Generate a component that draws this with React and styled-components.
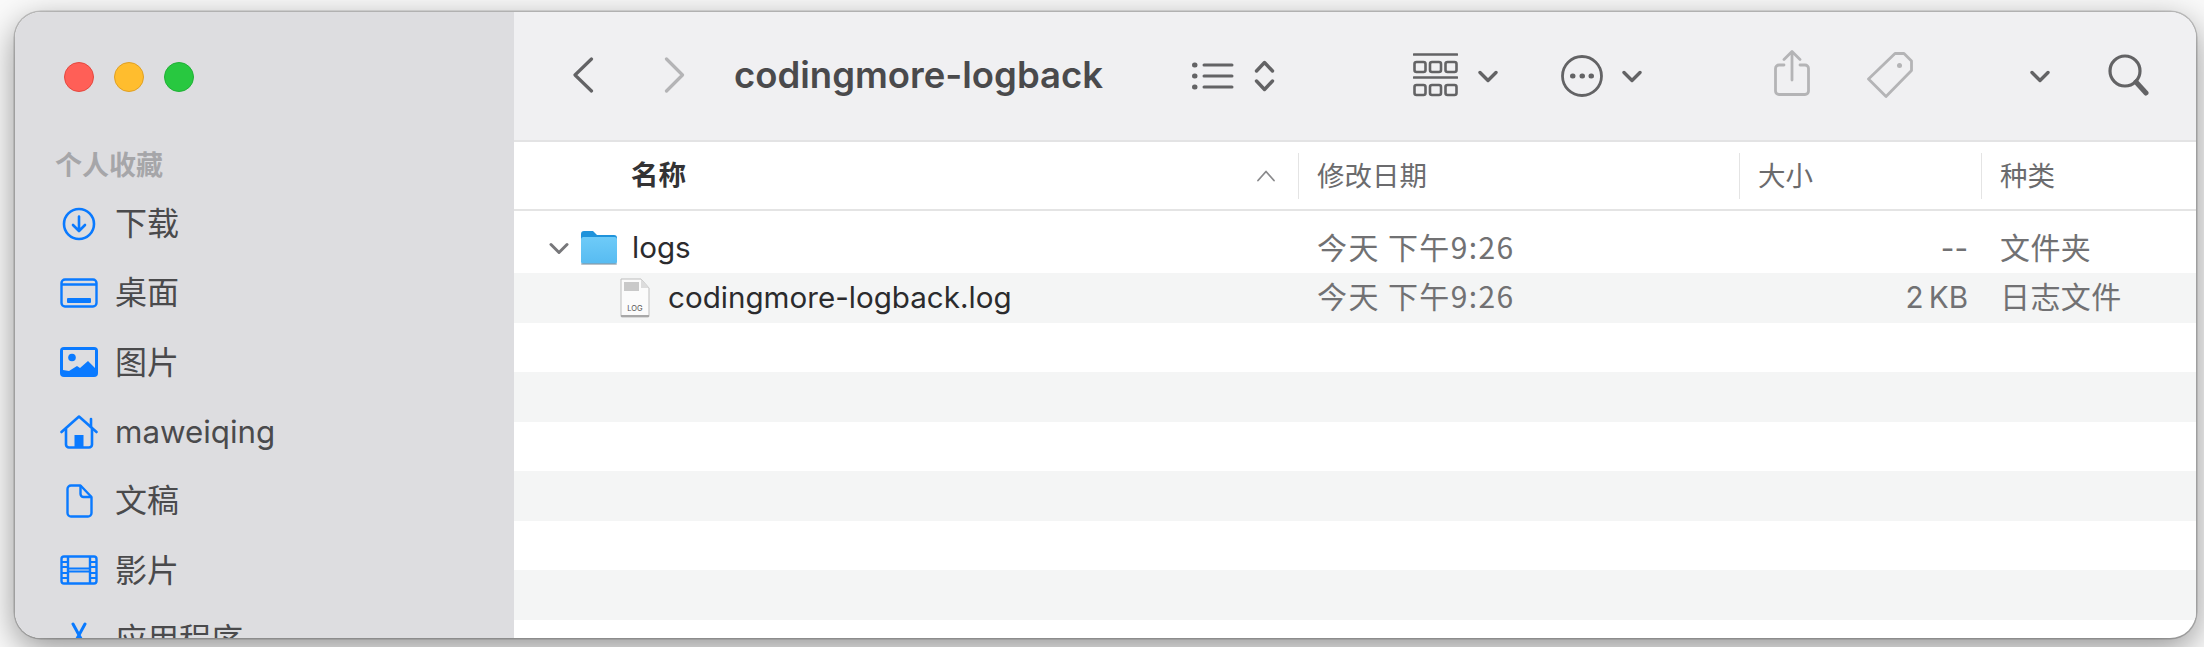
import React from 'react';
import styled, { createGlobalStyle } from 'styled-components';

const FONT = `"Inter", "Noto Sans CJK SC", sans-serif`;
const CJK = `"Noto Sans CJK SC", "Inter", sans-serif`;
const COLUMNS = '784px 441px 242px 1fr';

const GlobalStyle = createGlobalStyle`
  html, body {
    margin: 0;
    padding: 0;
    height: 100%;
    background: #fff;
    overflow: hidden;
  }
  #root {
    height: 100%;
  }
`;

const Page = styled.div`
  box-sizing: border-box;
  width: 2204px;
  height: 647px;
  padding: 12px 8px 9px 15px;
  background: #fafafa;
  font-family: ${FONT};
`;

const Window = styled.div`
  display: flex;
  height: 100%;
  border-radius: 26px;
  overflow: hidden;
  background: #fff;
  box-shadow: 0 0 0 1.5px rgba(0, 0, 0, 0.2), 0 10px 34px rgba(0, 0, 0, 0.42);
`;

const Sidebar = styled.aside`
  flex: 0 0 499px;
  box-sizing: border-box;
  padding: 50px 0 0 0;
  background: #dddde0;
  overflow: hidden;
`;

const Lights = styled.div`
  display: flex;
  gap: 20px;
  padding-left: 49px;
`;

const Light = styled.span`
  width: 30px;
  height: 30px;
  border-radius: 50%;
  box-sizing: border-box;
  background: ${(p) => p.$fill};
  border: 1px solid ${(p) => p.$edge};
`;

const SectionLabel = styled.div`
  margin: 54px 0 7px 40px;
  font-family: ${CJK};
  font-size: 27px;
  line-height: 36px;
  font-weight: 700;
  color: #a6a6a9;
`;

const NavItem = styled.div`
  display: flex;
  align-items: center;
  height: 69.3px;
  padding-left: 45px;
  font-family: ${(p) => (p.$latin ? FONT : CJK)};
  font-size: ${(p) => (p.$latin ? '31.3px' : '32px')};
  color: #4a4a4c;
  white-space: nowrap;
`;

const NavIcon = styled.span`
  display: flex;
  justify-content: center;
  flex: 0 0 38px;
  margin-right: 17px;
  color: #0a7aff;
`;

const NavText = styled.span`
  padding-bottom: ${(p) => (p.$latin ? 0 : 5)}px;
`;

const Main = styled.main`
  flex: 1;
  display: flex;
  flex-direction: column;
  min-width: 0;
`;

const Toolbar = styled.header`
  flex: 0 0 130px;
  box-sizing: border-box;
  display: flex;
  align-items: center;
  background: #f0f0f2;
  border-bottom: 2px solid #e3e3e4;
`;

const Tool = styled.svg`
  flex: none;
  margin-left: ${(p) => p.$left}px;
  margin-top: ${(p) => p.$top || 0}px;
  color: ${(p) => (p.$dim ? '#b4b4b6' : '#636365')};
  fill: none;
  stroke: currentColor;
  stroke-linecap: round;
  stroke-linejoin: round;
`;

const Title = styled.h1`
  flex: 0 0 369px;
  margin: -3px 0 0 49px;
  font-size: 36.5px;
  font-weight: 600;
  color: #4a4a4c;
  white-space: nowrap;
`;

const HeaderRow = styled.div`
  flex: 0 0 69px;
  box-sizing: border-box;
  display: grid;
  grid-template-columns: ${COLUMNS};
  align-items: center;
  border-bottom: 2px solid #e4e4e4;
  font-family: ${CJK};
  font-size: 27.5px;
  color: #6b6b6d;
`;

const NameHead = styled.div`
  display: flex;
  align-items: center;
  justify-content: space-between;
  padding: 0 22px 0 117px;
  font-weight: 700;
  color: #333335;
`;

const HeadCell = styled.div`
  display: flex;
  align-items: center;
  height: 46px;
  padding: 0 0 4px 18px;
  box-sizing: border-box;
  border-left: 1.5px solid #e4e4e4;
`;

const Rows = styled.div`
  flex: 1;
  padding-top: 12.5px;
`;

const Row = styled.div`
  display: grid;
  grid-template-columns: ${COLUMNS};
  align-items: center;
  height: 49.5px;
  background: ${(p) => (p.$striped ? '#f4f5f5' : '#fff')};
  font-size: 29.6px;
  color: #717173;
`;

const NameCell = styled.div`
  display: flex;
  align-items: center;
  padding-left: ${(p) => p.$indent}px;
  color: #2b2b2d;
  white-space: nowrap;
`;

const FileLabel = styled.span`
  display: flex;
  margin-left: ${(p) => p.$left}px;
  padding-bottom: ${(p) => p.$lift || 0}px;
`;

const DateCell = styled.div`
  padding: 0 0 5px 19px;
  font-family: ${CJK};
  font-size: 30px;
  letter-spacing: 1.4px;
  white-space: pre;
`;

const SizeCell = styled.div`
  padding: 0 13px 1px 0;
  text-align: right;
  word-spacing: -3px;
`;

const KindCell = styled.div`
  padding: 0 0 5px 19px;
  font-family: ${CJK};
  font-size: 30px;
  letter-spacing: 0.4px;
`;

const DownloadIcon = () => (
  <svg width="34" height="34" viewBox="0 0 34 34" fill="none" stroke="currentColor" strokeWidth="2.6" strokeLinecap="round" strokeLinejoin="round">
    <circle cx="17" cy="17" r="15" />
    <path d="M17 9.500v14M11 18l6 6 6-6" />
  </svg>
);

const DesktopIcon = () => (
  <svg width="38" height="30" viewBox="0 0 38 30" fill="none" stroke="currentColor" strokeWidth="2.4">
    <rect x="1.500" y="1.500" width="35" height="27" rx="3.500" />
    <path d="M1.500 6.500h35" />
    <rect x="7" y="20" width="24" height="5" rx="1" fill="currentColor" stroke="none" />
  </svg>
);

const PictureIcon = () => (
  <svg width="38" height="30" viewBox="0 0 38 30">
    <rect width="38" height="30" rx="4" fill="currentColor" />
    <path d="M3 3h32v18l-7-7-8 7-3-2-8 5-6-1z" fill="#dddde0" />
    <circle cx="12" cy="10.500" r="3.800" fill="currentColor" />
  </svg>
);

const HomeIcon = () => (
  <svg width="38" height="34" viewBox="0 0 38 34" fill="none" stroke="currentColor" strokeWidth="2.6" strokeLinecap="round" strokeLinejoin="round">
    <path d="M1.500 17 19 1.500 36.500 17" />
    <path d="M31 4v8" />
    <path d="M6 14v15.500a3 3 0 0 0 3 3h20a3 3 0 0 0 3-3V14" />
    <rect x="14.500" y="20" width="9" height="12.500" fill="currentColor" stroke="none" />
  </svg>
);

const DocumentIcon = () => (
  <svg width="27" height="34" viewBox="0 0 27 34" fill="none" stroke="currentColor" strokeWidth="2.4" strokeLinejoin="round">
    <path d="M5 1.500h9.500L25.500 13v16a3.500 3.500 0 0 1-3.500 3.500H5A3.500 3.500 0 0 1 1.500 29V5A3.500 3.500 0 0 1 5 1.500Z" />
    <path d="M14.500 1.500V10a3 3 0 0 0 3 3h8" />
  </svg>
);

const FilmIcon = () => (
  <svg width="38" height="30" viewBox="0 0 38 30" fill="none" stroke="currentColor" strokeWidth="2.4">
    <rect x="1.500" y="1.500" width="35" height="27" rx="2.500" />
    <path d="M8 13.500h22M8 16.500h22" strokeWidth="2" />
    <path d="M2 7h6M2 12h6M2 18h6M2 23h6M30 7h6M30 12h6M30 18h6M30 23h6" strokeWidth="2" />
    <path d="M8 1.500v27M30 1.500v27" />
  </svg>
);

const AppsIcon = () => (
  <svg width="20" height="34" viewBox="0 0 20 34" fill="none" stroke="currentColor" strokeWidth="3" strokeLinecap="round">
    <path d="M4 2l12 22M16 2 4 24" />
  </svg>
);

const FolderIcon = () => (
  <svg width="36" height="34" viewBox="0 0 36 34">
    <defs>
      <linearGradient id="folderBody" x1="0" y1="0" x2="0" y2="1">
        <stop offset="0" stopColor="#6ecbf8" />
        <stop offset="1" stopColor="#57bbf1" />
      </linearGradient>
    </defs>
    <path d="M0 3a3 3 0 0 1 3-3h9l4 4h17a3 3 0 0 1 3 3v6H0Z" fill="#1f93db" />
    <rect y="6" width="36" height="27" rx="2.500" fill="url(#folderBody)" />
    <rect y="32" width="36" height="2" rx="1" fill="#8a9aa5" opacity="0.6" />
  </svg>
);

const LogFileIcon = () => (
  <svg width="30" height="40" viewBox="0 0 30 40">
    <path d="M1 1h20l8 9v28a1 1 0 0 1-1 1H2a1 1 0 0 1-1-1Z" fill="#fbfbfb" stroke="#bdbdbd" strokeWidth="1" />
    <path d="M21 1v9h8Z" fill="#dcdcdc" />
    <rect x="4" y="4" width="15" height="9" fill="#c9c9c9" />
    <rect x="1" y="37" width="28" height="2" fill="#a8a8a8" />
    <text x="15" y="33" textAnchor="middle" fontFamily="Inter, sans-serif" fontSize="7.500" fill="#555">LOG</text>
  </svg>
);

const NAV = [
  { label: '下载', icon: <DownloadIcon /> },
  { label: '桌面', icon: <DesktopIcon /> },
  { label: '图片', icon: <PictureIcon /> },
  { label: 'maweiqing', icon: <HomeIcon />, latin: true },
  { label: '文稿', icon: <DocumentIcon /> },
  { label: '影片', icon: <FilmIcon /> },
  { label: '应用程序', icon: <AppsIcon /> },
];

const Chevron = ({ left, top }) => (
  <Tool $left={left} $top={top} width="20" height="13" viewBox="0 0 20 13" strokeWidth="3.400">
    <path d="M2 2.500 10 10.500 18 2.500" />
  </Tool>
);

export default function App() {
  return (
    <Page>
      <GlobalStyle />
      <Window>
        <Sidebar>
          <Lights>
            <Light $fill="#ff5f57" $edge="#e5483f" />
            <Light $fill="#ffbd2e" $edge="#e0a024" />
            <Light $fill="#28c840" $edge="#20b136" />
          </Lights>
          <SectionLabel>个人收藏</SectionLabel>
          {NAV.map((item) => (
            <NavItem key={item.label} $latin={item.latin}>
              <NavIcon>{item.icon}</NavIcon>
              <NavText $latin={item.latin}>{item.label}</NavText>
            </NavItem>
          ))}
        </Sidebar>
        <Main>
          <Toolbar>
            <Tool $left={58} $top={-3} width="22" height="36" viewBox="0 0 22 36" strokeWidth="3.200">
              <path d="M19.500 2 3 18 19.500 34" />
            </Tool>
            <Tool $left={70} $top={-3} $dim width="21" height="36" viewBox="0 0 21 36" strokeWidth="3.200">
              <path d="M2.500 2 18.500 18 2.500 34" />
            </Tool>
            <Title>codingmore-logback</Title>
            <Tool $left={89} $top={-1} width="42" height="28" viewBox="0 0 42 28" strokeWidth="3">
              <path d="M12 3h28M12 14h28M12 25h28" />
              <path d="M2.500 3h.5M2.500 14h.5M2.500 25h.5" strokeWidth="5" />
            </Tool>
            <Tool $left={20} width="21" height="32" viewBox="0 0 21 32" strokeWidth="3.400">
              <path d="M2.500 11 10.500 2.500 18.500 11M2.500 21 10.500 29.500 18.500 21" />
            </Tool>
            <Tool $left={138} $top={-2} width="45" height="44" viewBox="0 0 45 44" strokeWidth="2.600">
              <path d="M1 1.500h43M1 24.500h43" />
              <rect x="1.500" y="9" width="11" height="10" rx="2" />
              <rect x="17" y="9" width="11" height="10" rx="2" />
              <rect x="32.500" y="9" width="11" height="10" rx="2" />
              <rect x="1.500" y="32" width="11" height="10" rx="2" />
              <rect x="17" y="32" width="11" height="10" rx="2" />
              <rect x="32.500" y="32" width="11" height="10" rx="2" />
            </Tool>
            <Chevron left={20} />
            <Tool $left={63} $top={-1} width="42" height="42" viewBox="0 0 42 42" strokeWidth="2.800">
              <circle cx="21" cy="21" r="19.500" />
              <path d="M11.500 21h.5M21 21h.5M30 21h.5" strokeWidth="5" />
            </Tool>
            <Chevron left={19} />
            <Tool $left={132} $top={-6} $dim width="36" height="46" viewBox="0 0 36 46" strokeWidth="2.800">
              <path d="M10 15H5a3.500 3.500 0 0 0-3.500 3.500V41A3.500 3.500 0 0 0 5 44.500h26a3.500 3.500 0 0 0 3.500-3.500V18.500A3.500 3.500 0 0 0 31 15h-5" />
              <path d="M18 30V2M10 9.500 18 1.500 26 9.500" />
            </Tool>
            <Tool $left={57} $top={-2} $dim width="46" height="46" viewBox="0 0 46 46" strokeWidth="2.800">
              <path d="M28 1.500h9L44.500 9v9.500L19 44.500 1.500 27Z" />
              <circle cx="32.500" cy="13.500" r="2.500" fill="currentColor" stroke="none" />
            </Tool>
            <Chevron left={117} />
            <Tool $left={58} $top={-2} width="41" height="42" viewBox="0 0 41 42" strokeWidth="3.200">
              <circle cx="17" cy="17" r="15" />
              <path d="M28 28 38 39" strokeWidth="5" />
            </Tool>
          </Toolbar>
          <HeaderRow>
            <NameHead>
              <NavText>名称</NavText>
              <svg width="20" height="13" viewBox="0 0 20 13" fill="none" stroke="#8a8a8c" strokeWidth="1.800" strokeLinecap="round" strokeLinejoin="round">
                <path d="M2 11.500 10 2.500 18 11.500" />
              </svg>
            </NameHead>
            <HeadCell>修改日期</HeadCell>
            <HeadCell>大小</HeadCell>
            <HeadCell>种类</HeadCell>
          </HeaderRow>
          <Rows>
            <Row>
              <NameCell $indent={35}>
                <svg width="20" height="13" viewBox="0 0 20 13" fill="none" stroke="#77777a" strokeWidth="3" strokeLinecap="round" strokeLinejoin="round">
                  <path d="M2 2.500 10 10.500 18 2.500" />
                </svg>
                <FileLabel $left={12}><FolderIcon /></FileLabel>
                <FileLabel $left={15} $lift={2}>logs</FileLabel>
              </NameCell>
              <DateCell>今天 下午9:26</DateCell>
              <SizeCell>--</SizeCell>
              <KindCell>文件夹</KindCell>
            </Row>
            <Row $striped>
              <NameCell $indent={106}>
                <LogFileIcon />
                <FileLabel $left={18} $lift={2}>codingmore-logback.log</FileLabel>
              </NameCell>
              <DateCell>今天 下午9:26</DateCell>
              <SizeCell>2 KB</SizeCell>
              <KindCell>日志文件</KindCell>
            </Row>
            <Row />
            <Row $striped />
            <Row />
            <Row $striped />
            <Row />
            <Row $striped />
          </Rows>
        </Main>
      </Window>
    </Page>
  );
}
